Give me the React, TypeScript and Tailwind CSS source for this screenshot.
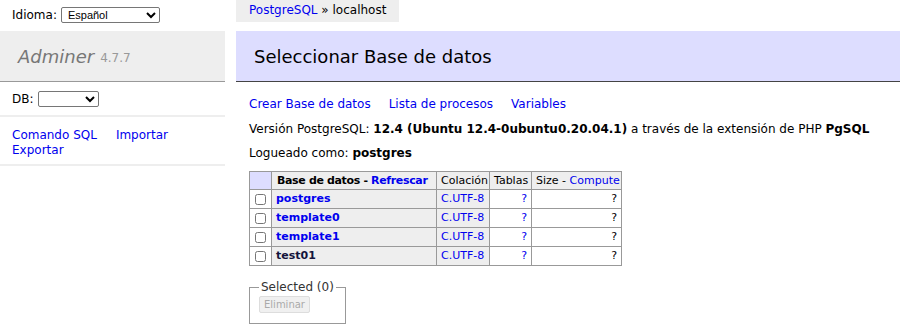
import { useState } from 'react'

const font = "font-['DejaVu_Sans',Verdana,sans-serif]"

const databases = [
  { name: 'postgres', visited: false },
  { name: 'template0', visited: false },
  { name: 'template1', visited: false },
  { name: 'test01', visited: true },
]

function Sidebar() {
  return (
    <aside className="w-[225px] shrink-0 text-[12px]">
      <div className="flex h-[23px] items-end pl-3 text-black">
        <span className="mr-1 leading-[15px]">Idioma:</span>
        <select
          defaultValue="es"
          className="h-[16px] w-[99px] rounded-[2px] border border-[#767676] bg-white px-0.5 text-[11px] leading-none text-black font-['Liberation_Sans',Arial,sans-serif]"
        >
          <option value="es">Español</option>
          <option value="en">English</option>
        </select>
      </div>
      <div className="mt-2 flex h-[51px] items-center border-b border-[#999] bg-[#eee] pl-[18px]">
        <span className="text-[18px] italic text-[#777]">Adminer</span>
        <span className="ml-[6px] mt-[4px] text-[12px] text-[#999]">4.7.7</span>
      </div>
      <div className="flex h-[35px] items-center border-b-2 border-[#eee] pl-3">
        <span className="mr-1">DB:</span>
        <select className="h-[16px] w-[61px] rounded-[2px] border border-[#767676] bg-white text-[11px]">
          <option value=""></option>
        </select>
      </div>
      <div className="flex h-[49px] flex-wrap content-start gap-x-[19px] border-b-2 border-[#eee] pl-3 pt-[11px] leading-[15px]">
        <a className="text-[#0000ee]">Comando SQL</a>
        <a className="text-[#0000ee]">Importar</a>
        <a className="w-full text-[#0000ee]">Exportar</a>
      </div>
    </aside>
  )
}

function DbTable() {
  const [checked, setChecked] = useState<Record<string, boolean>>({})
  const head = 'h-[18px] border border-[#999] bg-[#eee] px-1 py-0 text-left whitespace-nowrap'
  const cell = 'h-[19px] border border-[#999] px-1 py-0 whitespace-nowrap'
  return (
    <table className="w-[372px] table-fixed border-collapse text-[11px] leading-[14px]">
      <colgroup>
        <col className="w-[22px]" />
        <col className="w-[165px]" />
        <col className="w-[53px]" />
        <col className="w-[42px]" />
        <col className="w-[90px]" />
      </colgroup>
      <thead>
        <tr>
          <td className="h-[18px] border border-[#999] bg-[#ddf]" />
          <th className={`${head} pl-[5px] font-bold tracking-[-0.35px]`}>
            Base de datos - <a className="text-[#0000ee]">Refrescar</a>
          </th>
          <td className={head}>Colación</td>
          <td className={head}>Tablas</td>
          <td className={head}>
            Size - <a className="text-[#0000ee]">Compute</a>
          </td>
        </tr>
      </thead>
      <tbody>
        {databases.map((db) => (
          <tr key={db.name}>
            <td className="h-[19px] border border-[#999] bg-white text-center">
              <input
                type="checkbox"
                checked={!!checked[db.name]}
                onChange={(e) => setChecked({ ...checked, [db.name]: e.target.checked })}
                className="m-0 h-[11px] w-[11px] align-middle"
              />
            </td>
            <th className={`${cell} bg-[#eee] text-left font-bold`}>
              <a className={db.visited ? 'text-[#14143c]' : 'text-[#0000ee]'}>{db.name}</a>
            </th>
            <td className={`${cell} bg-[#eee]`}>
              <a className="text-[#0000ee]">C.UTF-8</a>
            </td>
            <td className={`${cell} bg-white text-right`}>
              <a className="text-[#0000ee]">?</a>
            </td>
            <td className={`${cell} bg-white text-right`}>?</td>
          </tr>
        ))}
      </tbody>
    </table>
  )
}

export default function App() {
  return (
    <div className={`flex min-h-[332px] bg-white text-black ${font}`}>
      <Sidebar />
      <main className="ml-[11px] flex-1">
        <div className="h-[22px] w-fit bg-[#eee] pl-[13px] pr-[13px] text-[12px] leading-[20px]">
          <a className="text-[#0000ee]">PostgreSQL</a> » localhost
        </div>
        <h2 className="mt-[9px] flex h-[51px] items-center border-b border-[#444] bg-[#ddf] pl-[18px] text-[18px] font-normal">
          Seleccionar Base de datos
        </h2>
        <div className="pl-[13px] text-[12px] leading-[15px]">
          <p className="mt-[15px] flex gap-x-[18px]">
            <a className="text-[#0000ee]">Crear Base de datos</a>
            <a className="text-[#0000ee]">Lista de procesos</a>
            <a className="text-[#0000ee]">Variables</a>
          </p>
          <p className="mt-[10px]">
            Versión PostgreSQL: <b>12.4 (Ubuntu 12.4-0ubuntu0.20.04.1)</b> a través de la extensión de PHP{' '}
            <b>PgSQL</b>
          </p>
          <p className="mt-[9px]">
            Logueado como: <b>postgres</b>
          </p>
          <div className="mt-[10px]">
            <DbTable />
          </div>
          <fieldset className="mt-[14px] h-[44px] w-[97px] border border-[#999] px-[9px] pb-[6px] pt-0">
            <legend className="whitespace-nowrap px-[2px] text-[12px] text-[#333]">Selected (0)</legend>
            <button
              disabled
              className="mt-[1px] h-[17px] rounded-[2px] border border-[#ddd] bg-[#f0f0f0] px-[4px] text-[10px] leading-none text-[#aaa]"
            >
              Eliminar
            </button>
          </fieldset>
        </div>
      </main>
    </div>
  )
}
